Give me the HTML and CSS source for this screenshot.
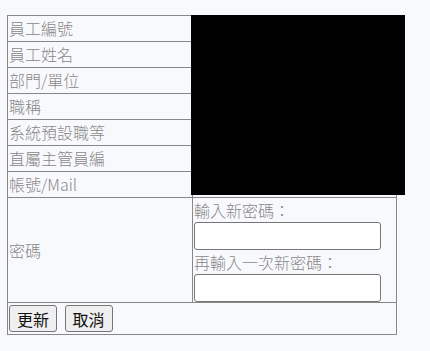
FILE: index.html
```html
<!DOCTYPE html>
<html lang="zh-Hant">
<head>
    <meta charset="UTF-8">
    <meta name="viewport" content="width=device-width, initial-scale=1.0">
    <title>帳號資料</title>
    <link rel="stylesheet" href="styles.css">
</head>
<body>
    <div class="wrap">
        <table class="info">
            <tr><td class="head">員工編號</td><td></td></tr>
            <tr><td class="head">員工姓名</td><td></td></tr>
            <tr><td class="head">部門/單位</td><td></td></tr>
            <tr><td class="head">職稱</td><td></td></tr>
            <tr><td class="head">系統預設職等</td><td></td></tr>
            <tr><td class="head">直屬主管員編</td><td></td></tr>
            <tr><td class="head">帳號/Mail</td><td></td></tr>
            <tr>
                <td class="head">密碼</td>
                <td class="pwd">
                    <label for="newPwd">輸入新密碼：</label>
                    <input type="password" id="newPwd" name="newPwd">
                    <label for="newPwd2">再輸入一次新密碼：</label>
                    <input type="password" id="newPwd2" name="newPwd2">
                </td>
            </tr>
            <tr>
                <td colspan="2" class="actions">
                    <button type="button">更新</button>
                    <button type="button">取消</button>
                </td>
            </tr>
        </table>
        <div class="mask"></div>
    </div>
</body>
</html>
```

FILE: styles.css
```css
body { margin: 15px 7px; background: #f8f9fc; font-family: "Noto Sans CJK TC", "Noto Sans", sans-serif; font-size: 16px; font-weight: 300; color: #888; }
.wrap { position: relative; width: 390px; }
.info { border-collapse: collapse; width: 390px; border: 1px solid #888; }
.info td { border: 1px solid #888; padding: 0 1px; height: 25px; line-height: 23px; vertical-align: middle; }
.info td.head { width: 182px; }
.pwd label { display: block; line-height: 24px; }
.pwd input { display: block; box-sizing: border-box; width: 187px; height: 28px; border: 1px solid #767676; border-radius: 3px; background: #fff; margin: 0; }
.info td.actions { padding: 2px 1px 2px 1px; }
.actions button { font-family: "Noto Sans CJK TC", sans-serif; font-size: 16px; font-weight: 400; color: #111; height: 27px; padding: 0 7px; margin: 0 4px 0 0; border: 1px solid #767676; border-radius: 3px; background: #efefef; line-height: 20px; }
.mask { position: absolute; left: 184px; top: -1px; width: 214px; height: 181px; background: #000; }
```
